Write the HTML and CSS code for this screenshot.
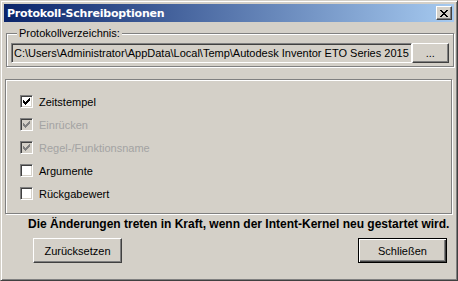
FILE: index.html
```html
<!DOCTYPE html>
<html lang="de">
<head>
  <meta charset="UTF-8" />
  <title>Protokoll-Schreiboptionen</title>
  <link rel="stylesheet" href="styles.css">
</head>
<body>
  <div class="window">
    <div class="titlebar">
      <span class="title">Protokoll-Schreiboptionen</span>
      <button class="close" aria-label="Schließen">
        <svg width="8" height="7" viewBox="0 0 8 7" shape-rendering="crispEdges">
          <path d="M0 0h2v1h-2zM6 0h2v1h-2zM1 1h2v1h-2zM5 1h2v1h-2zM2 2h4v1h-4zM3 3h2v1h-2zM2 4h4v1h-4zM1 5h2v1h-2zM5 5h2v1h-2zM0 6h2v1h-2zM6 6h2v1h-2z" fill="#000"/>
        </svg>
      </button>
    </div>

    <div class="content">
      <fieldset class="group">
        <legend>Protokollverzeichnis:</legend>
        <div class="path-row">
          <div class="path-field">C:\Users\Administrator\AppData\Local\Temp\Autodesk Inventor ETO Series 2015</div>
          <button class="btn btn-browse">...</button>
        </div>
      </fieldset>

      <div class="options">
        <label class="check">
          <span class="box"><svg width="7" height="7" viewBox="0 0 7 7" shape-rendering="crispEdges"><path d="M6 0h1v3h-1v1h-1v1h-1v1h-1v1h-1v-1h-1v-1h-1v-3h1v1h1v1h1v-1h1v-1h1z"/></svg></span>
          Zeitstempel
        </label>
        <label class="check disabled">
          <span class="box"><svg width="7" height="7" viewBox="0 0 7 7" shape-rendering="crispEdges"><path d="M6 0h1v3h-1v1h-1v1h-1v1h-1v1h-1v-1h-1v-1h-1v-3h1v1h1v1h1v-1h1v-1h1z"/></svg></span>
          Einrücken
        </label>
        <label class="check disabled">
          <span class="box"><svg width="7" height="7" viewBox="0 0 7 7" shape-rendering="crispEdges"><path d="M6 0h1v3h-1v1h-1v1h-1v1h-1v1h-1v-1h-1v-1h-1v-3h1v1h1v1h1v-1h1v-1h1z"/></svg></span>
          Regel-/Funktionsname
        </label>
        <label class="check">
          <span class="box"></span>
          Argumente
        </label>
        <label class="check">
          <span class="box"></span>
          Rückgabewert
        </label>
      </div>

      <p class="notice">Die Änderungen treten in Kraft, wenn der Intent-Kernel neu gestartet wird.</p>

      <div class="actions">
        <button class="btn">Zurücksetzen</button>
        <button class="btn btn-default">Schließen</button>
      </div>
    </div>
  </div>
</body>
</html>
```

FILE: styles.css
```css
:root {
  --face: #d4d0c8;
  --shadow: #808080;
  --dark: #404040;
  --light: #ffffff;
  --font-ui: 'Liberation Sans', Arial, sans-serif;
}

* {
  box-sizing: border-box;
}

body {
  margin: 0;
  background: var(--face);
  font-family: var(--font-ui);
  font-size: 11px;
  color: #000;
}

.window {
  width: 458px;
  height: 281px;
  display: flex;
  flex-direction: column;
  padding: 3px;
  background: var(--face);
  border-top: 1px solid var(--face);
  border-left: 1px solid var(--face);
  border-right: 1px solid var(--dark);
  border-bottom: 1px solid var(--dark);
  box-shadow: inset 1px 1px 0 var(--light), inset -1px -1px 0 var(--shadow);
}

.titlebar {
  height: 18px;
  flex: none;
  display: flex;
  align-items: center;
  justify-content: space-between;
  padding: 0 2px 0 3px;
  background: linear-gradient(90deg, #0a246a, #a6caf0);
}

.title {
  color: #fff;
  font-weight: bold;
  font-size: 11px;
  font-family: 'DejaVu Sans', Tahoma, sans-serif;
  letter-spacing: -0.2px;
}

.close {
  width: 16px;
  height: 14px;
  padding: 0;
  display: flex;
  align-items: center;
  justify-content: center;
  background: var(--face);
  border: 1px solid;
  border-color: var(--light) var(--dark) var(--dark) var(--light);
  box-shadow: inset -1px -1px 0 var(--shadow);
}

.content {
  flex: 1;
  display: flex;
  flex-direction: column;
}

.group {
  margin: 5px 1px 0 2px;
  padding: 3px 4px 3px 4px;
  border: 1px solid var(--shadow);
  box-shadow: inset 1px 1px 0 var(--light), 1px 1px 0 var(--light);
}

.group legend {
  padding: 0 2px;
  margin-left: 6px;
  line-height: 13px;
  background: var(--face);
}

.path-row {
  display: flex;
}

.path-field {
  flex: 1;
  height: 20px;
  line-height: 16px;
  padding: 1px 2px;
  white-space: nowrap;
  overflow: hidden;
  border: 1px solid;
  border-color: var(--shadow) var(--light) var(--light) var(--shadow);
  box-shadow: inset 1px 1px 0 var(--dark), inset -1px -1px 0 var(--face);
}

.btn {
  font-family: var(--font-ui);
  font-size: 11px;
  color: #000;
  background: var(--face);
  border: 1px solid;
  border-color: var(--light) var(--dark) var(--dark) var(--light);
  box-shadow: inset -1px -1px 0 var(--shadow);
  padding: 0;
}

.btn-browse {
  width: 37px;
  height: 20px;
}

.options {
  flex: none;
  margin: 12px 2px 0 1px;
  height: 135px;
  display: flex;
  flex-direction: column;
  gap: 10px;
  padding: 15px 0 0 14px;
  border: 1px solid var(--shadow);
  box-shadow: inset 1px 1px 0 var(--light), 1px 1px 0 var(--light);
}

.check {
  display: flex;
  align-items: center;
  gap: 6px;
  height: 13px;
}

.box {
  width: 13px;
  height: 13px;
  display: flex;
  align-items: center;
  justify-content: center;
  background: #fff;
  border: 1px solid;
  border-color: var(--shadow) var(--light) var(--light) var(--shadow);
  box-shadow: inset 1px 1px 0 var(--dark), inset -1px -1px 0 var(--face);
}

.box svg {
  fill: #000;
}

.disabled {
  color: #a3a3a3;
}

.disabled .box {
  background: var(--face);
}

.disabled .box svg {
  fill: var(--shadow);
}

.notice {
  margin: 3px 0 0 24px;
  font-weight: bold;
  font-size: 12px;
  line-height: 14px;
  white-space: nowrap;
}

.actions {
  display: flex;
  justify-content: space-between;
  margin: 7px 7px 0 29px;
}

.actions .btn {
  width: 89px;
  height: 25px;
}

.btn-default {
  border: 1px solid #000;
  box-shadow: inset 1px 1px 0 var(--light), inset -1px -1px 0 var(--dark), inset -2px -2px 0 var(--shadow);
}
```
